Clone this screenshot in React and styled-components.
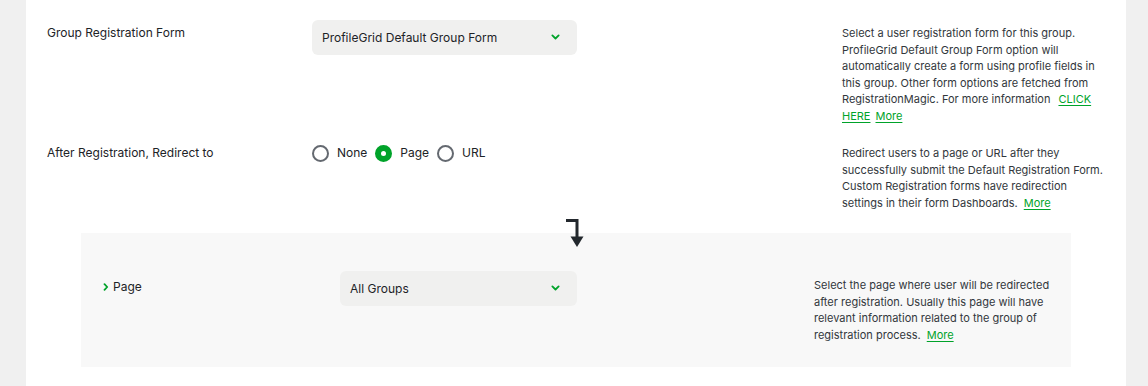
import React, { useState } from 'react';
import styled, { createGlobalStyle } from 'styled-components';

const GlobalStyle = createGlobalStyle`
  html, body {
    margin: 0;
    padding: 0;
    background: #f0f0f0;
  }
  body {
    font-family: Inter, "Liberation Sans", Arial, sans-serif;
    -webkit-font-smoothing: antialiased;
  }
`;

const GREEN = '#00a32a';

const Panel = styled.div`
  margin: 0 22px 0 26px;
  background: #fff;
  min-height: 386px;
  padding: 4px 19px 20px 21px;
  box-sizing: border-box;
`;

const Row = styled.div`
  display: grid;
  grid-template-columns: 25% 50% 25%;
  align-items: start;
  padding-top: 16px;
`;

const Label = styled.div`
  display: flex;
  align-items: center;
  gap: 4px;
  padding-top: ${(p) => (p.$sub ? 8 : 5)}px;
  font-size: 12px;
  line-height: 16.5px;
  color: #1d2327;
`;

const Control = styled.div`
  position: relative;
  width: 50%;
`;

const SelectBox = styled.div`
  display: flex;
  align-items: center;
  justify-content: space-between;
  height: 35px;
  padding: 0 17px 0 10px;
  box-sizing: border-box;
  background: #f0f0ef;
  border-radius: 6px;
  font-size: 12px;
  color: #1d2327;
  cursor: pointer;
`;

const Description = styled.div`
  padding-top: ${(p) => (p.$sub ? 6 : 5)}px;
  font-size: 11px;
  line-height: 16.5px;
  color: #32373c;
`;

const Link = styled.a`
  margin-left: ${(p) => p.$gap || 5}px;
  color: ${GREEN};
  text-decoration: underline;
  text-underline-offset: 2px;
`;

const RadioGroup = styled.div`
  display: flex;
  align-items: center;
  gap: 8px;
  padding-top: 5px;
`;

const RadioOption = styled.label`
  display: flex;
  align-items: center;
  gap: 8px;
  font-size: 12px;
  line-height: 16.5px;
  color: #1d2327;
  cursor: pointer;
`;

const RadioDot = styled.span`
  width: 17px;
  height: 17px;
  box-sizing: border-box;
  border-radius: 50%;
  border: 2px solid ${(p) => (p.$on ? GREEN : '#646970')};
  background: ${(p) => (p.$on ? GREEN : '#fff')};
  display: flex;
  align-items: center;
  justify-content: center;

  &::after {
    content: '';
    width: 5px;
    height: 5px;
    border-radius: 50%;
    background: #fff;
    display: ${(p) => (p.$on ? 'block' : 'none')};
  }
`;

const SubPanel = styled.div`
  margin: 22px 36px 0 34px;
  background: #f8f8f8;
  padding: 22px 20px 24px 22px;
`;

const FlowArrow = styled.svg`
  position: absolute;
  right: -9px;
  top: -55px;
`;

const Chevron = ({ size = 9 }) => (
  <svg width={size} height={size * 0.7} viewBox="0 0 10 7" fill="none">
    <path d="M1.5 1.5 L5 5 L8.5 1.5" stroke={GREEN} strokeWidth="2" strokeLinecap="round" strokeLinejoin="round" />
  </svg>
);

const Select = ({ value }) => (
  <SelectBox>
    <span>{value}</span>
    <Chevron />
  </SelectBox>
);

export default function App() {
  const [redirect, setRedirect] = useState('page');
  const options = [
    ['none', 'None'],
    ['page', 'Page'],
    ['url', 'URL'],
  ];

  return (
    <>
      <GlobalStyle />
      <Panel>
        <Row>
          <Label>Group Registration Form</Label>
          <Control>
            <Select value="ProfileGrid Default Group Form" />
          </Control>
          <Description>
            Select a user registration form for this group. ProfileGrid Default Group Form option will
            automatically create a form using profile fields in this group. Other form options are
            fetched from RegistrationMagic. For more information
            <Link href="#" $gap={8}>CLICK HERE</Link>
            <Link href="#">More</Link>
          </Description>
        </Row>

        <Row>
          <Label>After Registration, Redirect to</Label>
          <RadioGroup>
            {options.map(([key, text]) => (
              <RadioOption key={key} onClick={() => setRedirect(key)}>
                <RadioDot $on={redirect === key} />
                {text}
              </RadioOption>
            ))}
          </RadioGroup>
          <Description>
            Redirect users to a page or URL after they successfully submit the Default Registration
            Form. Custom Registration forms have redirection settings in their form Dashboards.
            <Link href="#" $gap={6}>More</Link>
          </Description>
        </Row>

        <SubPanel>
          <Row>
            <Label $sub>
              <svg width="6" height="8" viewBox="0 0 6 8" fill="none">
                <path d="M1.5 1.2 L4.2 4 L1.5 6.8" stroke={GREEN} strokeWidth="1.8" strokeLinecap="round" strokeLinejoin="round" />
              </svg>
              Page
            </Label>
            <Control>
              <FlowArrow width="22" height="32" viewBox="0 0 22 32">
                <path d="M2 4.5 H13 V23" stroke="#23282d" strokeWidth="3" fill="none" />
                <path d="M6.5 20.5 H19.5 L13 31 Z" fill="#23282d" />
              </FlowArrow>
              <Select value="All Groups" />
            </Control>
            <Description $sub>
              Select the page where user will be redirected after registration. Usually this page will
              have relevant information related to the group of registration process.
              <Link href="#" $gap={6}>More</Link>
            </Description>
          </Row>
        </SubPanel>
      </Panel>
    </>
  );
}
